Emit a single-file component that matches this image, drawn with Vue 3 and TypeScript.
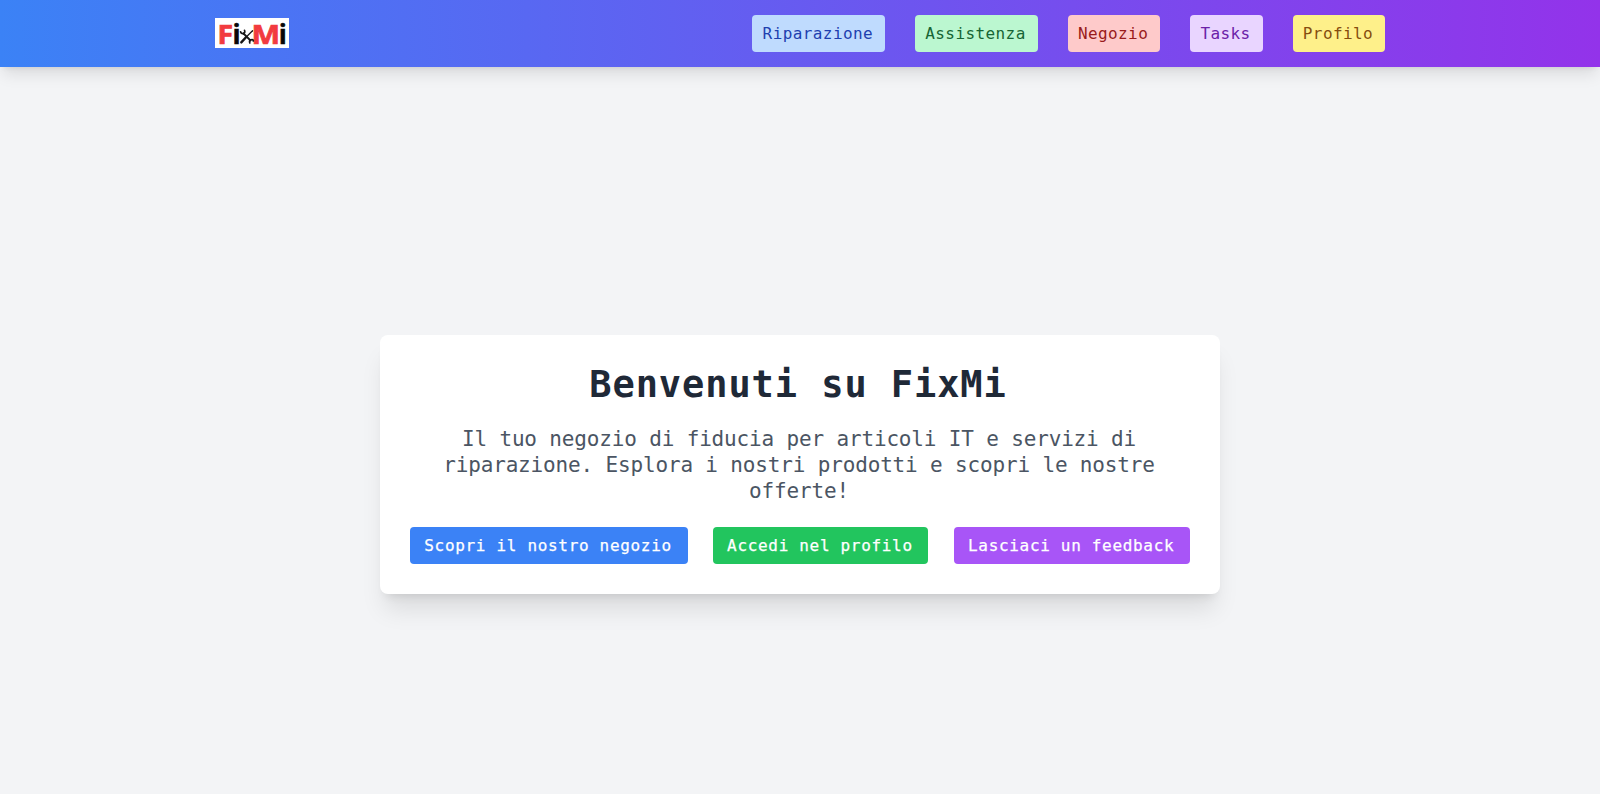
<script setup lang="ts">
interface Action {
  label: string
  tone: string
}

const links: Action[] = [
  { label: 'Riparazione', tone: 'repair' },
  { label: 'Assistenza', tone: 'support' },
  { label: 'Negozio', tone: 'shop' },
  { label: 'Tasks', tone: 'tasks' },
  { label: 'Profilo', tone: 'profile' },
]

const actions: Action[] = [
  { label: 'Scopri il nostro negozio', tone: 'discover' },
  { label: 'Accedi nel profilo', tone: 'login' },
  { label: 'Lasciaci un feedback', tone: 'feedback' },
]
</script>

<template>
  <div class="page">
    <header class="header">
      <div class="bar">
        <svg class="logo" viewBox="0 0 74 30" role="img" aria-label="FixMi">
          <rect width="74" height="30" fill="#fff" />
          <g class="wordmark">
            <text class="red" x="2.4" y="25.6" textLength="15.6" lengthAdjust="spacingAndGlyphs">F</text>
            <text class="black" x="17.8" y="25.6" textLength="7.6" lengthAdjust="spacingAndGlyphs">i</text>
            <text class="red" x="36.4" y="25.6" textLength="28.6" lengthAdjust="spacingAndGlyphs">M</text>
            <text class="black" x="64" y="25.6" textLength="7.6" lengthAdjust="spacingAndGlyphs">i</text>
          </g>
          <g fill="none" stroke="#161616" stroke-linecap="round">
            <path d="M28.5 15.5 35.5 22.5" stroke-width="1.8" />
            <path d="M37.5 12.8 31.5 18.8" stroke-width="1.3" />
            <path d="M31 19.2 26.3 24.4" stroke-width="2.4" />
            <path d="M25.6 13.8q.5 2.2 2.7 1.6t1.2-3.1M34.8 25q-.9-2.6 1.3-3.2t2.2 1.2" stroke-width="1.7" />
          </g>
        </svg>
        <nav class="nav">
          <a v-for="link in links" :key="link.tone" class="link" :class="link.tone">{{ link.label }}</a>
        </nav>
      </div>
    </header>
    <main class="main">
      <section class="card">
        <h1>Benvenuti su FixMi</h1>
        <p>Il tuo negozio di fiducia per articoli IT e servizi di riparazione. Esplora i nostri prodotti e scopri le nostre offerte!</p>
        <div class="actions">
          <a v-for="action in actions" :key="action.tone" class="button" :class="action.tone">{{ action.label }}</a>
        </div>
      </section>
    </main>
  </div>
</template>

<style>
body { margin: 0; }
</style>

<style scoped>
* { box-sizing: border-box; }
.page {
  display: flex;
  flex-direction: column;
  height: 794px;
  background: #f3f4f6;
  font-family: "DejaVu Sans Mono", "Liberation Mono", monospace;
}
.header {
  flex: none;
  height: 67px;
  background: linear-gradient(to right, #3b82f6, #9333ea);
  box-shadow: 0 10px 15px -3px rgb(0 0 0 / .1), 0 4px 6px -4px rgb(0 0 0 / .1);
}
.bar {
  display: flex;
  align-items: center;
  justify-content: space-between;
  width: 1170px;
  height: 100%;
  margin: 0 auto;
}
.logo { display: block; width: 74px; height: 30px; margin-bottom: 1px; overflow: visible; }
.wordmark { font: 700 26px "Open Sans", sans-serif; }
.red { fill: #f23b3f; stroke: #f23b3f; stroke-width: .7px; }
.black { fill: #080808; stroke: #080808; stroke-width: .7px; }
.nav { display: flex; gap: 30px; }
.link {
  height: 37px;
  padding: 0 11.9px 0 10.3px;
  border-radius: 4px;
  font-size: 16px;
  line-height: 37px;
  letter-spacing: .41px;
  white-space: nowrap;
}
.repair { background: #bfdbfe; color: #1e40af; }
.support { background: #bbf7d0; color: #166534; }
.shop { background: #fecaca; color: #991b1b; }
.tasks { background: #e9d5ff; color: #6b21a8; }
.profile { background: #fef08a; color: #854d0e; }
.main {
  display: flex;
  flex: 1;
  align-items: center;
  justify-content: center;
  padding-top: 68px;
}
.card {
  width: 840px;
  height: 259px;
  padding: 30px;
  border-radius: 8px;
  background: #fff;
  box-shadow: 0 20px 25px -5px rgb(0 0 0 / .1), 0 8px 10px -6px rgb(0 0 0 / .1);
  text-align: center;
}
h1 {
  margin: 0 4px 22px 0;
  padding-top: 1px;
  color: #1f2937;
  font-size: 37px;
  font-weight: 700;
  line-height: 37.5px;
  letter-spacing: .92px;
}
p {
  margin: 0 2px 22.3px 0;
  color: #4b5563;
  font-size: 21px;
  line-height: 26.3px;
  letter-spacing: -.16px;
}
.actions { display: flex; justify-content: space-between; }
.button {
  height: 37.5px;
  padding: 0 15.7px 0 14.3px;
  border-radius: 4px;
  color: #fff;
  font-size: 16px;
  line-height: 38px;
  letter-spacing: .68px;
  white-space: nowrap;
  -webkit-text-stroke: .25px #fff;
}
.discover { background: #3b82f6; }
.login { background: #22c55e; }
.feedback { background: #a855f7; }
</style>
